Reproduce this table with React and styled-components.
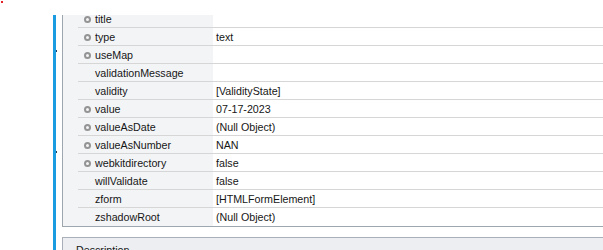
import React from 'react';
import styled, { createGlobalStyle } from 'styled-components';

const GlobalStyle = createGlobalStyle`
  html, body {
    margin: 0;
    padding: 0;
    background: #ffffff;
    overflow: hidden;
  }
  body {
    font-family: "Liberation Sans", Arial, sans-serif;
    font-size: 10.7px;
    color: #161616;
  }
`;

const props = [
  { name: 'title', value: '', dot: true },
  { name: 'type', value: 'text', dot: true },
  { name: 'useMap', value: '', dot: true },
  { name: 'validationMessage', value: '' },
  { name: 'validity', value: '[ValidityState]' },
  { name: 'value', value: '07-17-2023', dot: true },
  { name: 'valueAsDate', value: '(Null Object)', dot: true },
  { name: 'valueAsNumber', value: 'NAN', dot: true },
  { name: 'webkitdirectory', value: 'false', dot: true },
  { name: 'willValidate', value: 'false' },
  { name: 'zform', value: '[HTMLFormElement]' },
  { name: 'zshadowRoot', value: '(Null Object)' },
];

export default function App() {
  return (
    <>
      <GlobalStyle />
      <TopStrip>
        <RedMark />
      </TopStrip>
      <Main>
        <Grip $top={35} />
        <Grip $top={136} />
        <Column>
          <PropBox>
            <PropList>
              {props.map((p, i) => (
                <Row key={p.name} $last={i === props.length - 1}>
                  <NameCell>
                    <Dot $show={p.dot} />
                    {p.name}
                  </NameCell>
                  <ValueCell>{p.value}</ValueCell>
                </Row>
              ))}
            </PropList>
          </PropBox>
          <DescBox>Description</DescBox>
        </Column>
      </Main>
    </>
  );
}

const TopStrip = styled.div`
  height: 15px;
  display: flex;
  align-items: flex-start;
`;

const RedMark = styled.span`
  width: 2px;
  height: 2px;
  margin: 1px 0 0 1px;
  background: #e8202a;
`;

const Main = styled.div`
  position: relative;
  margin-left: 53px;
  border-left: 3px solid #1b9be0;
  padding-left: 6px;
  height: 235px;
  overflow: hidden;
`;

const Grip = styled.span`
  position: absolute;
  left: 0;
  top: ${(p) => p.$top}px;
  width: 1px;
  height: 2px;
  background: #1f3f5c;
`;

const Column = styled.div`
  display: flex;
  flex-direction: column;
  gap: 10px;
  width: 800px;
`;

const PropBox = styled.div`
  height: 211px;
  overflow: hidden;
  border-left: 1px solid #9ea6b0;
  border-bottom: 1px solid #9ea6b0;
  background: linear-gradient(to right, #f3f4f6 150px, #ffffff 150px);
`;

const PropList = styled.div`
  margin-top: -5px;
  display: flex;
  flex-direction: column;
`;

const Row = styled.div`
  display: grid;
  grid-template-columns: 136px 1fr;
  height: 17px;
  margin-left: 15px;
  border-bottom: 1px solid ${(p) => (p.$last ? 'transparent' : '#d6d6d6')};
  align-items: center;
  line-height: 17px;
  padding-top: 1px;
  box-sizing: content-box;
  height: 16px;
`;

const NameCell = styled.div`
  display: flex;
  align-items: center;
  gap: 4px;
  padding-left: 6px;
  white-space: nowrap;
`;

const Dot = styled.span`
  width: 3px;
  height: 3px;
  margin-top: -1px;
  border-radius: 50%;
  border: 2px solid ${(p) => (p.$show ? '#949494' : 'transparent')};
  flex-shrink: 0;
`;

const ValueCell = styled.div`
  padding-left: 2px;
  white-space: nowrap;
`;

const DescBox = styled.div`
  height: 30px;
  border: 1px solid #a9b0ba;
  border-right: none;
  background: #eceef2;
  padding: 5px 0 0 13px;
  line-height: 14px;
`;
